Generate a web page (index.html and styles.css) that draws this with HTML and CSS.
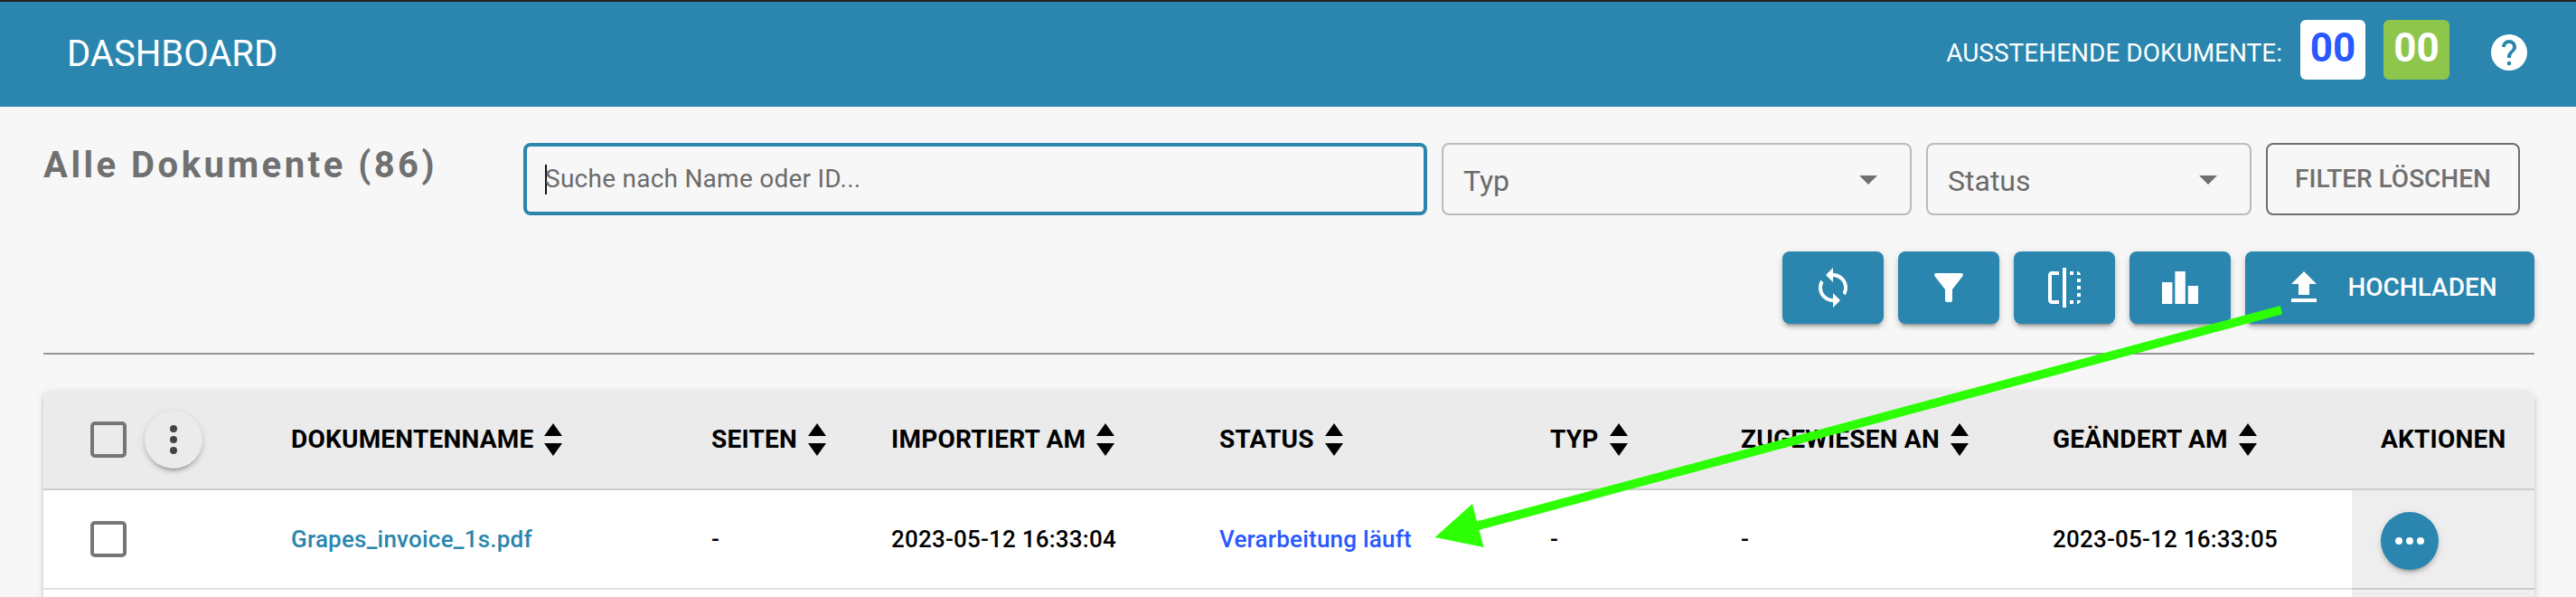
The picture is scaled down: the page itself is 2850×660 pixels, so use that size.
FILE: index.html
```html
<!DOCTYPE html>
<html lang="de">
<head>
<meta charset="utf-8">
<title>Dashboard</title>
<link rel="stylesheet" href="styles.css">
</head>
<body>
<svg class="defs" width="0" height="0" aria-hidden="true">
  <symbol id="sort" viewBox="0 0 20 36"><path d="M10 0l10 14H0zM0 22h20L10 36z"/></symbol>
</svg>
<header class="topbar">
  <h1 class="topbar-title">DASHBOARD</h1>
  <span class="pending">AUSSTEHENDE DOKUMENTE:</span>
  <span class="badge badge-white">00</span>
  <span class="badge badge-green">00</span>
  <svg class="icon help" viewBox="0 0 24 24"><path d="M15.07 11.25L14.17 12.17C13.45 12.89 13 13.5 13 15H11V14.5C11 13.39 11.45 12.39 12.17 11.67L13.41 10.41C13.78 10.05 14 9.55 14 9A2 2 0 0 0 12 7A2 2 0 0 0 10 9H8A4 4 0 0 1 12 5A4 4 0 0 1 16 9C16 9.88 15.64 10.67 15.07 11.25M13 19H11V17H13M12 2A10 10 0 0 0 2 12A10 10 0 0 0 12 22A10 10 0 0 0 22 12C22 6.47 17.5 2 12 2Z"/></svg>
</header>
<main class="page">
  <section class="filters">
    <h2 class="page-title">Alle Dokumente (86)</h2>
    <div class="search"><span class="caret"></span><span class="placeholder">Suche nach Name oder ID...</span></div>
    <div class="select select-type"><span>Typ</span><svg class="icon" viewBox="0 0 24 24"><path d="M7 10l5 5 5-5z"/></svg></div>
    <div class="select select-status"><span>Status</span><svg class="icon" viewBox="0 0 24 24"><path d="M7 10l5 5 5-5z"/></svg></div>
    <button class="clear">FILTER LÖSCHEN</button>
  </section>
  <section class="toolbar">
    <button class="btn"><svg class="icon" viewBox="0 0 24 24"><path d="M12 18A6 6 0 0 1 6 12C6 11 6.25 10.03 6.7 9.2L5.24 7.74C4.46 8.97 4 10.43 4 12A8 8 0 0 0 12 20V23L16 19L12 15M12 4V1L8 5L12 9V6A6 6 0 0 1 18 12C18 13 17.75 13.97 17.3 14.8L18.76 16.26C19.54 15.03 20 13.57 20 12A8 8 0 0 0 12 4Z"/></svg></button>
    <button class="btn"><svg class="icon" viewBox="0 0 24 24"><path d="M4.25 5.61C6.27 8.2 10 13 10 13v6c0 .55.45 1 1 1h2c.55 0 1-.45 1-1v-6s3.72-4.8 5.74-7.39C20.25 4.95 19.78 4 18.95 4H5.04c-.83 0-1.3.95-.79 1.61z"/></svg></button>
    <button class="btn"><svg class="icon" viewBox="0 0 24 24"><path d="M15 21h2v-2h-2v2zm4-12h2V7h-2v2zM3 5v14c0 1.100.9 2 2 2h4v-2H5V5h4V3H5c-1.100 0-2 .9-2 2zm16-2v2h2c0-1.100-.9-2-2-2zm-8 20h2V1h-2v22zm8-6h2v-2h-2v2zM15 5h2V3h-2v2zm4 8h2v-2h-2v2zm0 8c1.100 0 2-.9 2-2h-2v2z"/></svg></button>
    <button class="btn"><svg class="icon" viewBox="0 0 24 24"><path d="M2 9h5.700v12H2zM9.200 3h5.700v18H9.200zM16.400 11H22v10h-5.600z"/></svg></button>
    <button class="btn btn-upload"><svg class="icon" viewBox="0 0 24 24"><path d="M9 16V10H5L12 3L19 10H15V16H9M5 20V18H19V20H5Z"/></svg><span class="btn-label">HOCHLADEN</span></button>
  </section>
  <section class="card">
    <div class="row head">
      <div class="cell select-cell"><span class="check"></span><span class="more"><svg class="icon" viewBox="0 0 24 24"><path d="M12 16a2 2 0 1 1 0 4 2 2 0 0 1 0-4m0-6a2 2 0 1 1 0 4 2 2 0 0 1 0-4m0-6a2 2 0 1 1 0 4 2 2 0 0 1 0-4z"/></svg></span></div>
      <div class="cell"><span class="label">DOKUMENTENNAME</span><svg class="sort"><use href="#sort"/></svg></div>
      <div class="cell"><span class="label">SEITEN</span><svg class="sort"><use href="#sort"/></svg></div>
      <div class="cell"><span class="label">IMPORTIERT AM</span><svg class="sort"><use href="#sort"/></svg></div>
      <div class="cell"><span class="label">STATUS</span><svg class="sort"><use href="#sort"/></svg></div>
      <div class="cell"><span class="label">TYP</span><svg class="sort"><use href="#sort"/></svg></div>
      <div class="cell"><span class="label">ZUGEWIESEN AN</span><svg class="sort"><use href="#sort"/></svg></div>
      <div class="cell"><span class="label">GEÄNDERT AM</span><svg class="sort"><use href="#sort"/></svg></div>
      <div class="cell actions"><span class="label">AKTIONEN</span></div>
    </div>
    <div class="row">
      <div class="cell select-cell"><span class="check"></span></div>
      <div class="cell name">Grapes_invoice_1s.pdf</div>
      <div class="cell">-</div>
      <div class="cell">2023-05-12 16:33:04</div>
      <div class="cell status">Verarbeitung läuft</div>
      <div class="cell">-</div>
      <div class="cell">-</div>
      <div class="cell">2023-05-12 16:33:05</div>
      <div class="cell actions"><span class="round"><svg class="icon" viewBox="0 0 24 24"><path d="M16 12a2 2 0 1 1 4 0 2 2 0 0 1-4 0m-6 0a2 2 0 1 1 4 0 2 2 0 0 1-4 0m-6 0a2 2 0 1 1 4 0 2 2 0 0 1-4 0z"/></svg></span></div>
    </div>
    <div class="row row-next">
      <div class="rest"></div><div class="actions"></div>
    </div>
  </section>
</main>
<svg class="pointer" viewBox="0 0 2850 660"><path class="pointer-line" d="M1632 582L2524 342.700"/><path class="pointer-head" d="M1587.500 594L1629 557L1641.500 605z"/></svg>
</body>
</html>
```
FILE: styles.css
```css
* { box-sizing: border-box; }

body {
  margin: 0;
  height: 660px;
  overflow: hidden;
  position: relative;
  background: #f7f7f7;
  color: #000;
  font-family: Roboto, sans-serif;
  font-size: 28px;
}

.defs { display: block; }
.icon { width: 48px; height: 48px; flex: none; fill: currentColor; }

button {
  font: inherit;
  font-weight: 500;
  border: 0;
  padding: 0;
}

.topbar {
  display: flex;
  align-items: center;
  height: 118px;
  padding: 0 50px 0 74px;
  border-top: 2px solid #222;
  background: #2a86ae;
  color: #fff;
}
.topbar-title { margin: 0 auto 0 0; font-size: 40px; font-weight: 400; line-height: 46px; padding-bottom: 1px; }
.pending { margin-right: 20px; padding-bottom: 3px; }
.badge {
  width: 72px;
  height: 66px;
  margin: 0 20px 10px 0;
  border-radius: 6px;
  font-size: 44px;
  font-weight: 700;
  line-height: 63px;
  text-align: center;
}
.badge-white { background: #fff; color: #2958ff; }
.badge-green { width: 73px; background: #8dc64b; }
.help { margin: 0 0 4px 22px; }

.page { padding: 40px 46px 0 48px; }

.filters { display: flex; align-items: flex-start; color: #6b6b6b; }
.page-title {
  width: 531px;
  margin: 0;
  padding-top: 1px;
  font-size: 40px;
  font-weight: 700;
  line-height: 47px;
  letter-spacing: 3.500px;
  color: #707070;
}
.search {
  display: flex;
  align-items: center;
  width: 1000px;
  height: 80px;
  margin-right: 16px;
  padding: 0 20px;
  border: 4px solid #2a86ae;
  border-radius: 8px;
}
.caret { width: 2px; height: 33px; margin-right: -2px; background: #111; }
.placeholder { padding-bottom: 2px; letter-spacing: .25px; }
.select {
  display: flex;
  align-items: center;
  justify-content: space-between;
  height: 80px;
  margin-right: 16px;
  padding: 3px 22px 0;
  border: 2px solid #bbb;
  border-radius: 8px;
  font-size: 32px;
}
.select .icon { margin-top: -4px; color: #707070; }
.select-type { width: 520px; }
.select-status { width: 360px; }
.clear {
  width: 281px;
  height: 80px;
  padding-bottom: 2px;
  border: 2px solid #707070;
  border-radius: 8px;
  background: none;
  color: #707070;
}

.toolbar {
  display: flex;
  justify-content: flex-end;
  gap: 16px;
  width: 2756px;
  margin-top: 40px;
  padding-bottom: 32px;
  border-bottom: 2px solid #949494;
}
.btn {
  display: flex;
  align-items: center;
  justify-content: center;
  width: 112px;
  height: 80px;
  border-radius: 8px;
  background: #2a86ae;
  color: #fff;
  box-shadow: 0 6px 2px -4px rgba(0,0,0,.2), 0 4px 4px rgba(0,0,0,.14), 0 2px 10px rgba(0,0,0,.12);
}
.btn-upload { width: 320px; gap: 24px; }
.btn-label { padding-bottom: 2px; }

.card {
  width: 2756px;
  height: 228px;
  margin-top: 40px;
  border-radius: 8px 8px 0 0;
  overflow: hidden;
  background: #fff;
  box-shadow: 0 6px 2px -4px rgba(0,0,0,.2), 0 4px 4px rgba(0,0,0,.14), 0 2px 10px rgba(0,0,0,.12);
}
.row {
  display: grid;
  grid-template-columns: 274px 465px 199px 363px 366px 211px 345px 331px 202px;
  height: 110px;
  font-size: 26px;
  font-weight: 500;
  letter-spacing: .22px;
}
.row-next { grid-template-columns: 2554px 202px; height: 8px; }
.cell {
  display: flex;
  align-items: center;
  border-bottom: 2px solid #e0e0e0;
  white-space: nowrap;
}
.head { background: #ebebeb; font-size: 28px; font-weight: 700; }
.head .cell { border-color: #ccc; }
.label { padding-bottom: 2px; }
.select-cell { padding-left: 52px; gap: 20px; }
.check { width: 40px; height: 40px; border: 4px solid #757575; border-radius: 5px; }
.more, .round {
  display: flex;
  align-items: center;
  justify-content: center;
  width: 64px;
  height: 64px;
  border-radius: 50%;
  box-shadow: 0 6px 2px -4px rgba(0,0,0,.16), 0 4px 4px rgba(0,0,0,.12), 0 2px 10px rgba(0,0,0,.1);
}
.more { background: #ebebeb; color: #444; }
.round { background: #2a86ae; color: #fff; margin-top: 4px; }
.sort { width: 20px; height: 36px; margin-left: 12px; }
.actions { padding-left: 32px; background: #eee; }
.row .cell.actions { border-color: #ccc; }
.head .actions { background: none; }
.name { color: #2a86ae; }
.status { color: #2958ff; }

.pointer { position: absolute; inset: 0; width: 2850px; height: 660px; pointer-events: none; }
.pointer-line { stroke: #2dff05; stroke-width: 9.600px; }
.pointer-head { fill: #2dff05; }
```
